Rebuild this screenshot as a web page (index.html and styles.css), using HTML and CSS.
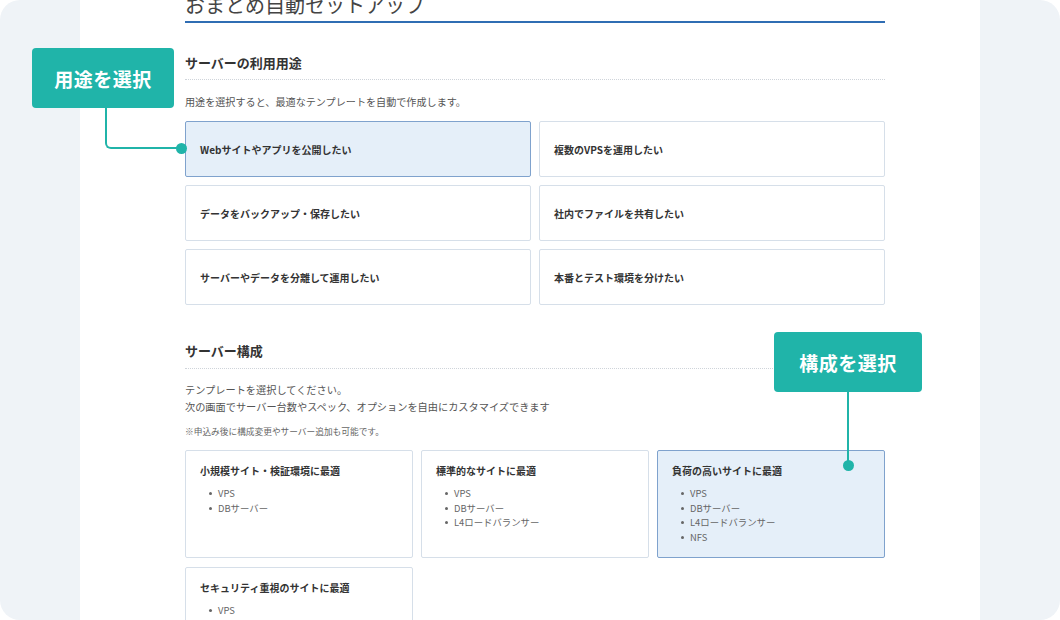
FILE: index.html
```html
<!DOCTYPE html>
<html lang="ja">
<head>
    <meta charset="UTF-8">
    <meta name="viewport" content="width=device-width, initial-scale=1.0">
    <title>おまとめ自動セットアップ</title>
    <link rel="stylesheet" href="styles.css">
</head>
<body>
    <div class="frame">
        <div class="panel">
            <h1 class="page-title">おまとめ自動セットアップ</h1>

            <!-- 用途 -->
            <h2 class="section-title">サーバーの利用用途</h2>
            <p class="lead">用途を選択すると、最適なテンプレートを自動で作成します。</p>
            <div class="purpose-grid">
                <div class="purpose selected">Webサイトやアプリを公開したい</div>
                <div class="purpose">複数のVPSを運用したい</div>
                <div class="purpose">データをバックアップ・保存したい</div>
                <div class="purpose">社内でファイルを共有したい</div>
                <div class="purpose">サーバーやデータを分離して運用したい</div>
                <div class="purpose">本番とテスト環境を分けたい</div>
            </div>

            <!-- 構成 -->
            <h2 class="section-title second">サーバー構成</h2>
            <p class="lead tall">テンプレートを選択してください。<br>次の画面でサーバー台数やスペック、オプションを自由にカスタマイズできます</p>
            <p class="note">※申込み後に構成変更やサーバー追加も可能です。</p>
            <div class="config-grid">
                <div class="config">
                    <h3>小規模サイト・検証環境に最適</h3>
                    <ul>
                        <li>VPS</li>
                        <li>DBサーバー</li>
                    </ul>
                </div>
                <div class="config">
                    <h3>標準的なサイトに最適</h3>
                    <ul>
                        <li>VPS</li>
                        <li>DBサーバー</li>
                        <li>L4ロードバランサー</li>
                    </ul>
                </div>
                <div class="config selected">
                    <h3>負荷の高いサイトに最適</h3>
                    <ul>
                        <li>VPS</li>
                        <li>DBサーバー</li>
                        <li>L4ロードバランサー</li>
                        <li>NFS</li>
                    </ul>
                </div>
                <div class="config">
                    <h3>セキュリティ重視のサイトに最適</h3>
                    <ul>
                        <li>VPS</li>
                        <li>DBサーバー</li>
                    </ul>
                </div>
            </div>
        </div>

        <!-- 吹き出し -->
        <div class="callout callout-purpose">用途を選択</div>
        <div class="connector connector-purpose"></div>
        <div class="callout callout-config">構成を選択</div>
        <div class="connector connector-config"></div>
    </div>
</body>
</html>
```

FILE: styles.css
```css
/* ベース */
* { margin: 0; padding: 0; box-sizing: border-box; }
body { background: #fff; font-family: "Noto Sans CJK JP", "Noto Sans", sans-serif; color: #333; }
.frame { position: relative; width: 1060px; height: 620px; background: #eff3f7; border-radius: 20px; overflow: hidden; }
.panel { display: flow-root; width: 900px; height: 100%; margin-left: 80px; background: #fff; padding: 0 95px 0 105px; }

/* 見出し */
.page-title { margin-top: -7px; font-size: 20px; line-height: 24px; font-weight: 400; color: #444; padding-bottom: 4px; border-bottom: 2px solid #2f6db3; }
.section-title { margin-top: 31px; font-size: 13px; line-height: 18px; font-weight: 700; color: #333; padding-bottom: 7px; border-bottom: 1px dotted #cfd4da; }
.section-title.second { margin-top: 37px; padding-bottom: 8px; }
.lead { margin-top: 14px; font-size: 10.1px; line-height: 16px; color: #555; }
.lead.tall { margin-top: 12px; font-size: 10.2px; line-height: 17px; }
.note { margin-top: 11px; font-size: 8.7px; line-height: 12px; color: #666; }

/* 用途カード */
.purpose-grid { margin-top: 11px; display: grid; grid-template-columns: 346px 346px; grid-auto-rows: 56px; column-gap: 8px; row-gap: 8px; }
.purpose { display: flex; align-items: center; padding-left: 14px; border: 1px solid #d6dfe9; border-radius: 2px; font-size: 10px; font-weight: 700; color: #333; background: #fff; }
.purpose.selected, .config.selected { background: #e5eff9; border-color: #7fa2cd; }

/* 構成カード */
.config-grid { margin-top: 12px; display: grid; grid-template-columns: repeat(3, 228px); grid-auto-rows: 108px; column-gap: 8px; row-gap: 9px; }
.config { border: 1px solid #d6dfe9; border-radius: 2px; padding: 13px 14px; background: #fff; }
.config h3 { font-size: 10px; line-height: 14px; font-weight: 700; color: #333; }
.config ul { list-style: none; margin-top: 8px; }
.config li { position: relative; padding-left: 18px; font-size: 9.4px; line-height: 14.5px; color: #666; }
.config li::before { content: ""; position: absolute; left: 9px; top: 6px; width: 3px; height: 3px; border-radius: 50%; background: #666; }

/* 吹き出し */
.callout { position: absolute; height: 60px; display: flex; align-items: center; justify-content: center; background: #20b4a9; color: #fff; border-radius: 4px; font-size: 19px; font-weight: 700; letter-spacing: 0.5px; z-index: 3; }
.callout-purpose { left: 32px; top: 48px; width: 142px; }
.callout-config { left: 774px; top: 332px; width: 148px; }

.connector { position: absolute; z-index: 2; }
.connector::after { content: ""; position: absolute; width: 11px; height: 11px; border-radius: 50%; background: #20b4a9; }
.connector-purpose { left: 105px; top: 106px; width: 76px; height: 43px; border-left: 2px solid #20b4a9; border-bottom: 2px solid #20b4a9; border-bottom-left-radius: 6px; }
.connector-purpose::after { right: -6px; bottom: -6.5px; }
.connector-config { left: 847px; top: 390px; width: 2px; height: 76px; background: #20b4a9; }
.connector-config::after { left: -4.5px; bottom: -5px; }
```
